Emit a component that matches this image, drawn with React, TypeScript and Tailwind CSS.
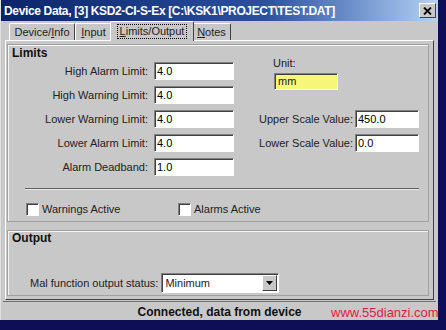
import { ReactNode } from 'react';

function Field({ value, w, yellow }: { value: string; w: string; yellow?: boolean }) {
  return (
    <div
      className={`${w} h-[18px] flex items-center pl-[2px] text-[11px] text-black border border-t-[#808080] border-l-[#808080] border-b-white border-r-white shadow-[inset_1px_1px_0_#404040] ${
        yellow ? 'bg-[#f6f67a]' : 'bg-white'
      }`}
    >
      {value}
    </div>
  );
}

function Check({ label, w }: { label: string; w: string }) {
  return (
    <div className={`${w} flex items-center gap-[3px]`}>
      <div className="w-[13px] h-[13px] bg-white border border-t-[#808080] border-l-[#808080] border-b-white border-r-white shadow-[inset_1px_1px_0_#404040]" />
      <span className="text-[11px] text-[#222]">{label}</span>
    </div>
  );
}

function Tab({ children, w, active }: { children: ReactNode; w: string; active?: boolean }) {
  if (active) {
    return (
      <div className={`${w} h-[20px] -mb-px -mx-[2px] z-10 relative flex items-center justify-center bg-[#c8c8c8] border-t border-l border-t-white border-l-white border-r border-r-[#404040] rounded-t-[2px]`}>
        <span className="px-[2px] leading-[13px] outline outline-1 outline-dotted outline-black text-[11px]">{children}</span>
      </div>
    );
  }
  return (
    <div className={`${w} h-[17px] flex items-center justify-center border-t border-l border-t-white border-l-white border-r border-r-[#404040] rounded-t-[2px] text-[11px]`}>
      {children}
    </div>
  );
}

const leftRows = [
  ['High Alarm Limit:', '4.0'],
  ['High Warning Limit:', '4.0'],
  ['Lower Warning Limit:', '4.0'],
  ['Lower Alarm Limit:', '4.0'],
  ['Alarm Deadband:', '1.0'],
];

export default function App() {
  return (
    <div className="relative w-[446px] h-[330px] bg-[#0e0e56] overflow-hidden font-['Liberation_Sans',Arial,sans-serif] text-[#222]">
      <div className="w-[438px] h-[320px] bg-[#c8c8c8] flex flex-col border-l border-l-[#e0e0e0]">
        {/* title bar */}
        <div className="h-[21px] flex items-center justify-between pl-[3px] pr-[2px] bg-gradient-to-r from-[#0a246a] via-[#2c4f9e] via-60% to-[#b4d2f4]">
          <span className="text-white font-bold text-[12px] tracking-[-0.35px]">
            Device Data, [3] KSD2-CI-S-Ex [C:\KSK1\PROJECT\TEST.DAT]
          </span>
          <div className="w-[17px] h-[15px] bg-[#c8c8c8] border border-t-white border-l-white border-b-[#404040] border-r-[#404040] flex items-center justify-center">
            <svg width="9" height="8" viewBox="0 0 9 8">
              <path d="M1 0.5l7 7M8 0.5l-7 7" stroke="#000" strokeWidth="1.8" />
            </svg>
          </div>
        </div>

        {/* tabs */}
        <div className="h-[19px] flex items-end pl-[8px]">
          <Tab w="w-[66px]">
            Device/<u>I</u>nfo
          </Tab>
          <Tab w="w-[37px]">
            <u>I</u>nput
          </Tab>
          <Tab w="w-[84px]" active>
            <u>L</u>imits/Output
          </Tab>
          <Tab w="w-[39px]">
            <u>N</u>otes
          </Tab>
        </div>

        {/* tab panel */}
        <div className="ml-[4px] w-[429px] h-[260px] border border-t-white border-l-white border-b-[#404040] border-r-[#404040] flex flex-col pt-[3px] pl-px pr-[4px]">
          {/* Limits group */}
          <div className="h-[178px] border border-[#a0a0a0] shadow-[inset_1px_1px_0_#f4f4f4] flex flex-col pt-px">
            <div className="h-[15px] leading-[15px] pl-[4px] text-[12px] font-bold text-[#111]">Limits</div>
            <div className="flex mt-px">
              <div className="flex flex-col gap-[6px]">
                {leftRows.map(([label, v]) => (
                  <div key={label} className="h-[18px] flex items-center gap-[6px]">
                    <span className="w-[140px] text-right text-[11px]">{label}</span>
                    <Field value={v} w="w-[80px]" />
                  </div>
                ))}
              </div>
              <div className="ml-[25px] -mt-[5px] flex flex-col">
                <span className="pl-[14px] h-[13px] leading-[13px] text-[11px]">Unit:</span>
                <div className="ml-[15px] mt-[3px]">
                  <div className="w-[64px] h-[17px] flex items-center pl-[3px] text-[11px] bg-[#f6f67a] border border-t-[#808080] border-l-[#808080] border-b-white border-r-white shadow-[inset_1px_1px_0_#404040]">
                    mm
                  </div>
                </div>
                <div className="mt-[20px] flex flex-col gap-[6px]">
                  <div className="h-[18px] flex items-center gap-[2px]">
                    <span className="w-[94px] text-right text-[11px]">Upper Scale Value:</span>
                    <Field value="450.0" w="w-[64px]" />
                  </div>
                  <div className="h-[18px] flex items-center gap-[2px]">
                    <span className="w-[94px] text-right text-[11px]">Lower Scale Value:</span>
                    <Field value="0.0" w="w-[64px]" />
                  </div>
                </div>
              </div>
            </div>
            <div className="ml-[17px] mt-[12px] w-[394px] border-t border-t-[#606060] border-b border-b-[#e8e8e8]" />
            <div className="ml-[18px] mt-[11px] flex">
              <Check label="Warnings Active" w="w-[152px]" />
              <Check label="Alarms Active" w="w-[100px]" />
            </div>
          </div>

          {/* Output group */}
          <div className="mt-[8px] h-[66px] border border-[#a0a0a0] shadow-[inset_1px_1px_0_#f4f4f4] flex flex-col pt-px">
            <div className="h-[13px] leading-[13px] pl-[4px] text-[12px] font-bold text-[#111]">Output</div>
            <div className="ml-[22px] mt-[28px] flex items-center gap-[3px]">
              <span className="text-[11px]">Mal function output status:</span>
              <div className="w-[118px] h-[20px] bg-white flex items-center justify-between border border-t-[#808080] border-l-[#808080] border-b-white border-r-white shadow-[inset_1px_1px_0_#404040] pl-[3px] pr-px">
                <span className="text-[11px]">Minimum</span>
                <div className="w-[15px] h-[16px] bg-[#c8c8c8] border border-t-white border-l-white border-b-[#404040] border-r-[#404040] flex items-center justify-center">
                  <svg width="7" height="4" viewBox="0 0 7 4">
                    <path d="M0 0h7L3.5 4z" fill="#000" />
                  </svg>
                </div>
              </div>
            </div>
          </div>
        </div>

        {/* status bar */}
        <div className="mt-px mx-[2px] h-[19px] border-t border-t-[#707070] flex items-center justify-center pt-[2px] text-[12px] font-bold text-[#111]">
          Connected, data from device
        </div>
      </div>

      <span className="absolute left-[331px] top-[305px] text-[13px] leading-[16px] text-[#e0203a]">www.55dianzi.com</span>
    </div>
  );
}
